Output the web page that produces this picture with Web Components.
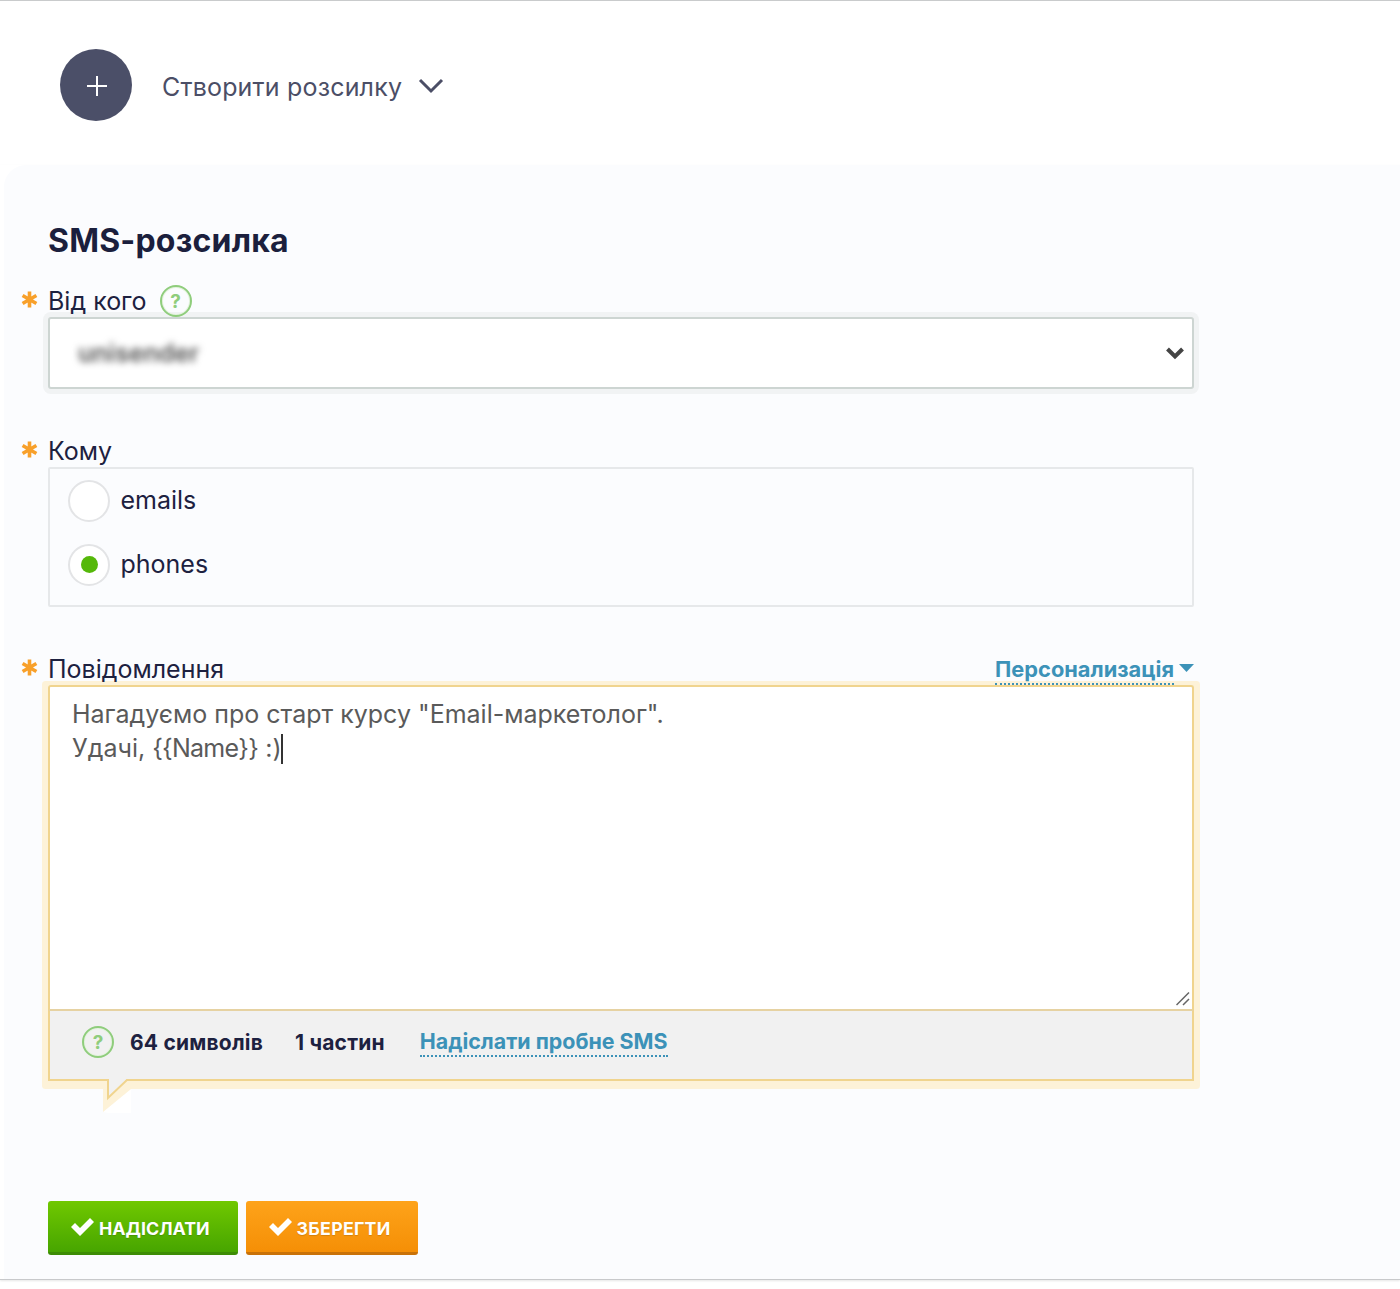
<!DOCTYPE html>
<html lang="uk">
<head>
<meta charset="utf-8">
<title>SMS-розсилка</title>
<style>
  html, body { margin: 0; padding: 0; background: #fff; }
  body { font-family: Inter, "Noto Sans", sans-serif; color: #1d2140; height: 1289px; overflow: hidden; }
</style>
</head>
<body>
<sms-page>
  <create-menu slot="top">Створити розсилку</create-menu>
  <h-title slot="title">SMS-розсилка</h-title>

  <form-field label="Від кого" help style="--after: 46px">
    <sender-select>unisender</sender-select>
  </form-field>

  <form-field label="Кому" style="--after: 46px">
    <radio-group>
      <radio-item>emails</radio-item>
      <radio-item checked>phones</radio-item>
    </radio-group>
  </form-field>

  <form-field label="Повідомлення" style="--after: 120px">
    <drop-link slot="aside">Персонализація</drop-link>
    <message-box>
      <span slot="line">Нагадуємо про старт курсу "Email-маркетолог".</span>
      <span slot="line">Удачі, <span style="letter-spacing:-.75px">{{Name}}</span> :)</span>
      <stat-text slot="stat">64 символів</stat-text>
      <stat-text slot="stat">1 частин</stat-text>
      <test-link slot="stat">Надіслати пробне SMS</test-link>
    </message-box>
  </form-field>

  <action-button slot="actions" color="green">НАДІСЛАТИ</action-button>
  <action-button slot="actions" color="orange">ЗБЕРЕГТИ</action-button>
</sms-page>

<script>
// every element gets its own shadow root, markup + styles live in the class
class Base extends HTMLElement {
    constructor() {
        super();
        this.attachShadow({ mode: 'open' });
        this.shadowRoot.innerHTML = this.markup();
    }
    markup() { return '<slot></slot>'; }
}

class SmsPage extends Base {
    markup() {
        return `
        <style>
            :host { display: block; border-top: 1px solid #c9cbcc; }
            .top { height: 164px; padding: 48px 0 0 60px; box-sizing: border-box; }
            .wrap { border-bottom: 1px solid #c8c9cb; box-shadow: 0 1px 2px rgba(0,0,0,.1); }
            .panel {
                margin-left: 4px; height: 1114px; box-sizing: border-box;
                padding: 56px 206px 0 44px;
                background: #fbfcfe; border-top-left-radius: 22px;
            }
            .actions { display: flex; gap: 8px; }
        </style>
        <div class="top"><slot name="top"></slot></div>
        <div class="wrap">
            <div class="panel">
                <slot name="title"></slot>
                <slot></slot>
                <div class="actions"><slot name="actions"></slot></div>
            </div>
        </div>`;
    }
}

class CreateMenu extends Base {
    markup() {
        return `
        <style>
            :host { display: flex; align-items: center; height: 72px; color: #4b4e66; font-size: 25px; letter-spacing: .18px; }
            .plus { width: 72px; height: 72px; border-radius: 50%; background: #4b4f68; display: flex; align-items: center; justify-content: center; margin-right: 30px; }
            .plus svg { margin: 2px 0 0 1px; }
            svg { display: block; }
            .label { margin-top: 3px; }
            .chev { margin: 2px 0 0 16px; }
        </style>
        <span class="plus"><svg width="20" height="20" viewBox="0 0 20 20"><path d="M10 0v20M0 10h20" stroke="#fff" stroke-width="2" fill="none"/></svg></span>
        <span class="label"><slot></slot></span>
        <svg class="chev" width="26" height="16" viewBox="0 0 26 16"><path d="M2 2l11 11L24 2" stroke="#4b4e66" stroke-width="3" fill="none"/></svg>`;
    }
}

class HTitle extends Base {
    markup() {
        return `
        <style>
            :host { display: block; font-size: 32px; letter-spacing: .2px; font-weight: 700; line-height: 40px; color: #1b1f3d; margin-bottom: 24px; }
        </style>
        <slot></slot>`;
    }
}

class FormField extends Base {
    markup() {
        const label = this.getAttribute('label') || '';
        const help = this.hasAttribute('help') ? '<help-mark></help-mark>' : '';
        return `
        <style>
            :host { display: block; margin-bottom: var(--after, 0); }
            .head { display: flex; align-items: center; height: 32px; position: relative; z-index: 1; font-size: 25px; color: #1d2140; }
            .star { position: absolute; left: -27px; top: 6px; }
            .name { margin-right: 13px; }
            .aside { margin-left: auto; }
        </style>
        <div class="head">
            <svg class="star" width="17" height="17" viewBox="0 0 17 17"><path d="M8.500 .5v16M1.600 4.500l13.800 8M15.400 4.500l-13.800 8" stroke="#f8a02a" stroke-width="3.600" fill="none"/></svg>
            <span class="name">${label}</span>${help}
            <span class="aside"><slot name="aside"></slot></span>
        </div>
        <slot></slot>`;
    }
}

class HelpMark extends Base {
    markup() {
        return `
        <style>
            :host {
                display: inline-flex; align-items: center; justify-content: center;
                width: 32px; height: 32px; box-sizing: border-box; border-radius: 50%;
                border: 2px solid #8fcd7c; box-shadow: inset 0 0 0 1px #e4f3de;
                color: #8fcd7c; font: 700 19px Inter, sans-serif;
            }
        </style>?`;
    }
}

class SenderSelect extends Base {
    markup() {
        return `
        <style>
            :host {
                display: flex; align-items: center; justify-content: space-between;
                height: 72px; box-sizing: border-box; padding: 0 7px 0 28px;
                background: #fff; border: 2px solid #cdd5d2; border-radius: 3px;
                box-shadow: 0 0 0 5px #f1f3f4; font-size: 25px; font-weight: 600; color: #555;
            }
            .val { filter: blur(3.500px); }
            svg { display: block; }
        </style>
        <span class="val"><slot></slot></span>
        <svg width="20" height="14" viewBox="0 0 20 14"><path d="M2.500 3l7.500 7.500L17.500 3" stroke="#444" stroke-width="4" fill="none"/></svg>`;
    }
}

class RadioGroup extends Base {
    markup() {
        return `
        <style>
            :host {
                display: flex; flex-direction: column; gap: 22px; height: 140px; box-sizing: border-box;
                padding: 11px 18px; border: 2px solid #e6e8ea; border-radius: 2px;
            }
        </style>
        <slot></slot>`;
    }
}

class RadioItem extends Base {
    markup() {
        const dot = this.hasAttribute('checked') ? '<i></i>' : '';
        return `
        <style>
            :host { display: flex; align-items: center; height: 42px; font-size: 25px; color: #1d2140; }
            .ring {
                width: 42px; height: 42px; box-sizing: border-box; border-radius: 50%; margin-right: 10.500px;
                border: 2px solid #e3e4e6; background: #fff; display: flex; align-items: center; justify-content: center;
            }
            .txt { margin-bottom: 2px; }
            i { width: 17px; height: 17px; border-radius: 50%; background: #55b80a; margin-top: -1px; }
        </style>
        <span class="ring">${dot}</span><span class="txt"><slot></slot></span>`;
    }
}

class DropLink extends Base {
    markup() {
        return `
        <style>
            :host { display: inline-flex; align-items: center; font-size: 21.800px; font-weight: 700; color: #3c92b8; }
            .txt { border-bottom: 2px dotted #3c92b8; line-height: 27px; }
            svg { margin-left: 5px; display: block; margin-top: -6px; }
        </style>
        <span class="txt"><slot></slot></span>
        <svg width="15" height="8" viewBox="0 0 15 8"><path d="M0 0h15L7.500 8z" fill="#3c92b8"/></svg>`;
    }
}

class StatText extends Base {
    markup() {
        return `
        <style>
            :host { display: inline-block; font-size: 21px; letter-spacing: .2px; font-weight: 700; color: #1d2140; }
        </style>
        <slot></slot>`;
    }
}

class TestLink extends Base {
    markup() {
        return `
        <style>
            :host { display: inline-block; margin-left: 3px; font-size: 21.400px; font-weight: 700; color: #3c92b8; border-bottom: 2px dotted #3c92b8; line-height: 27px; }
        </style>
        <slot></slot>`;
    }
}

class MessageBox extends Base {
    markup() {
        return `
        <style>
            :host { display: block; position: relative; box-shadow: 0 2px 0 6px #fdf2d8; border-radius: 1px; background: #fdf2d8; }
            .text {
                height: 326px; box-sizing: border-box; padding: 10px 22px;
                background: #fff; border: 2px solid #f0d48e; border-bottom-color: #e6d2a2;
                border-radius: 3px 3px 0 0; position: relative;
                font-size: 25px; line-height: 34px; color: #5a5a5a;
            }
            .text ::slotted(span) { display: block; }
            .grip { position: absolute; right: 2px; bottom: 3px; display: block; }
            .foot {
                height: 70px; box-sizing: border-box; padding: 0 30px 6px 32px;
                display: flex; align-items: center; gap: 32px;
                background: #f1f1f1; border: 2px solid #f0d48e; border-top: 0;
            }
            .foot help-mark { margin-right: -16px; }
            .tail { position: absolute; left: 55px; top: 394px; display: block; }
        </style>
        <div class="text">
            <slot name="line"></slot>
            <svg class="grip" width="14" height="14" viewBox="0 0 14 14"><path d="M.5 13L13 .5M7 13l6-6" stroke="#666" stroke-width="1.500" fill="none"/></svg>
        </div>
        <div class="foot"><help-mark></help-mark><slot name="stat"></slot></div>
        <svg class="tail" width="30" height="36" viewBox="0 0 30 36">
            <path d="M0 33L28 10V34H6z" fill="#fff"/>
            <path d="M0 2H28V10L0 33z" fill="#fdf2d8"/>
            <path d="M6 0V17L24 0z" fill="#f1f1f1"/>
            <path d="M5 0V19L25 0" fill="none" stroke="#f0d48e" stroke-width="2"/>
        </svg>`;
    }
    connectedCallback() {
        // caret goes after the last line of text
        const lines = this.querySelectorAll('[slot=line]');
        const last = lines[lines.length - 1];
        if (last && !last.querySelector('i')) {
            const c = document.createElement('i');
            c.style.cssText = 'display:inline-block;width:2px;height:30px;background:#333;vertical-align:-7px;margin-left:-1px';
            last.appendChild(c);
        }
    }
}

class ActionButton extends Base {
    markup() {
        const green = this.getAttribute('color') === 'green';
        const bg = green ? 'linear-gradient(#70c800, #47a500)' : 'linear-gradient(#fea31a, #f58f06)';
        const edge = green ? '#3d8c05' : '#c97208';
        const spacing = green ? '0' : '.25px';
        return `
        <style>
            :host {
                display: inline-flex; align-items: center; height: 54px; box-sizing: border-box;
                padding: 3px 28px 0 23px; border-radius: 3px; border-bottom: 3px solid ${edge};
                background: ${bg}; color: #fff; font-size: 17.800px; letter-spacing: ${spacing}; font-weight: 700;
                text-shadow: 0 1px 1px rgba(0,0,0,.15);
            }
            svg { display: block; margin: -3px 5px 0 0; }
        </style>
        <svg width="23" height="19" viewBox="0 0 23 19"><path d="M0 10l4-4 5 5L19 1l4 4L9 19z" fill="#fff"/></svg>
        <slot></slot>`;
    }
}

customElements.define('help-mark', HelpMark);
customElements.define('stat-text', StatText);
customElements.define('test-link', TestLink);
customElements.define('sms-page', SmsPage);
customElements.define('create-menu', CreateMenu);
customElements.define('h-title', HTitle);
customElements.define('form-field', FormField);
customElements.define('sender-select', SenderSelect);
customElements.define('radio-group', RadioGroup);
customElements.define('radio-item', RadioItem);
customElements.define('drop-link', DropLink);
customElements.define('message-box', MessageBox);
customElements.define('action-button', ActionButton);
</script>
</body>
</html>
